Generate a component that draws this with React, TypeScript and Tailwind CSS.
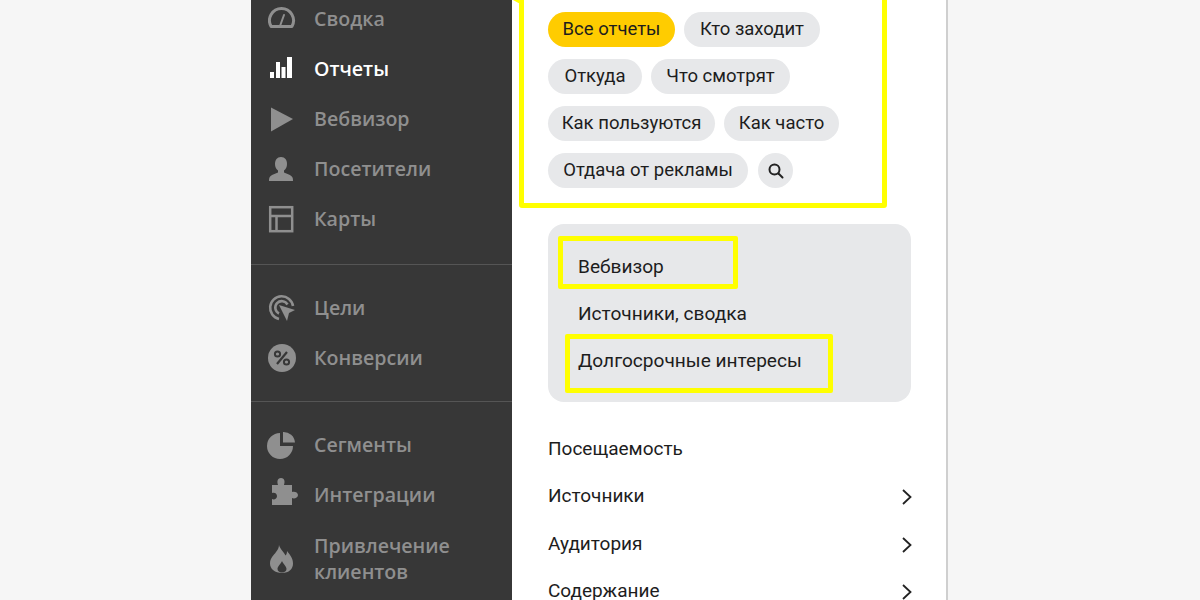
import { ReactNode } from "react";

const IconGauge = () => (
  <svg width="28" height="28" viewBox="0 0 28 28" fill="none" stroke="currentColor">
    <path d="M3.100 21.500 A12 12 0 1 1 23.900 21.500 Z" strokeWidth="3" strokeLinejoin="round" />
    <path d="M12 21 L16 10" strokeWidth="2" strokeLinecap="round" />
  </svg>
);

const IconBars = () => (
  <svg width="28" height="28" viewBox="0 0 28 28" fill="currentColor">
    <rect x="2" y="17" width="4" height="6" />
    <rect x="8" y="7" width="4" height="16" />
    <rect x="13.500" y="12" width="4" height="11" />
    <rect x="19" y="2" width="5" height="21" />
  </svg>
);

const IconPlay = () => (
  <svg width="28" height="28" viewBox="0 0 28 28" fill="currentColor">
    <path d="M3 2.500 L25 14 L3 26.500 Z" />
  </svg>
);

const IconUser = () => (
  <svg width="28" height="28" viewBox="0 0 28 28" fill="currentColor">
    <path d="M13 2c-4 0-6 3-6 7 0 3 1 5 3 6.500v2c-3 1.500-7 2-8.500 5-.4 1-.5 2-.5 3.500h24c0-1.500-.1-2.500-.5-3.500-1.500-3-5.500-3.500-8.500-5v-2c2-1.500 3-3.500 3-6.500 0-4-2-7-6-7z" />
  </svg>
);

const IconLayout = () => (
  <svg width="28" height="28" viewBox="0 0 28 28" fill="none" stroke="currentColor" strokeWidth="2.500">
    <rect x="2.200" y="2.200" width="22" height="24" />
    <path d="M2 11 H25 M8.500 11 V26" />
  </svg>
);

const IconTarget = () => (
  <svg width="28" height="28" viewBox="0 0 28 28" fill="none" stroke="currentColor" strokeWidth="2.600">
    <path d="M11 25 A11.500 11.500 0 1 1 25 12" />
    <path d="M11 19.500 A6.500 6.500 0 1 1 19.500 10.500" />
    <path d="M11 11 L27 16 L21 19 L19 27 Z" fill="currentColor" stroke="none" />
  </svg>
);

const IconPercent = () => (
  <svg width="28" height="28" viewBox="0 0 28 28">
    <circle cx="14" cy="14" r="14" fill="currentColor" />
    <circle cx="9.500" cy="10" r="2.600" fill="none" stroke="#373737" strokeWidth="2" />
    <circle cx="18.500" cy="18" r="2.600" fill="none" stroke="#373737" strokeWidth="2" />
    <path d="M19 8 L9 20" stroke="#373737" strokeWidth="2.200" />
  </svg>
);

const IconPie = () => (
  <svg width="28" height="28" viewBox="0 0 28 28" fill="currentColor" className="overflow-visible">
    <path d="M12 2 V15 H25 A13 13 0 1 1 12 2 Z" />
    <path d="M15 1 A11.500 11.500 0 0 1 27 11.500 H15 Z" />
  </svg>
);

const IconPuzzle = () => (
  <svg width="28" height="28" viewBox="0 0 28 28" fill="currentColor" className="overflow-visible">
    <path d="M4 4 H10 C9 1 9 -3 13 -3 C17 -3 17 1 16 4 H24 V11 C26 10 30 11 30 14 C30 17 26 18 24 17 V24 H4 V18 C6 19 9 18 9 15 C9 12 6 11 4 12 Z" />
  </svg>
);

const IconFlame = () => (
  <svg width="28" height="28" viewBox="0 0 28 28" fill="currentColor" fillRule="evenodd">
    <path d="M11 0 C12 4 16 7 17.500 10.500 C18.500 9.500 19 8 19 6 C22 10 25 13 25 18.500 C25 24 21 28 14 28 C7 28 2 24 2 18.500 C2 13 6 10 8 7 C9.500 5 11 3 11 0 Z M14 16 C13 19 9.500 21 9.500 24 C9.500 26 11.500 27.500 14 27.500 C16.500 27.500 18.500 26 18.500 24 C18.500 21 15 19 14 16 Z" />
  </svg>
);

const Chevron = () => (
  <svg width="14" height="18" viewBox="0 0 14 18" fill="none" stroke="#222" strokeWidth="1.800" className="translate-y-[1px]">
    <path d="M3 2 L10.500 9 L3 16" />
  </svg>
);

const IconSearch = () => (
  <svg width="16" height="16" viewBox="0 0 16 16" fill="none" stroke="#222" strokeWidth="2">
    <circle cx="6.500" cy="6.500" r="5" />
    <path d="M10.500 10.500 L14.500 14.500" strokeLinecap="round" />
  </svg>
);

function SideItem({ icon, active, children }: { icon: ReactNode; active?: boolean; children: ReactNode }) {
  return (
    <div className={`flex h-[50px] items-center pl-[17px] ${active ? "text-white" : "text-[#8f8f8f]"}`}>
      <span className="flex w-[28px] shrink-0 items-center justify-center">{icon}</span>
      <span className="ml-[18px] font-['Open_Sans',sans-serif] text-[19.600px] leading-[26px] font-semibold">
        {children}
      </span>
    </div>
  );
}

function Chip({ active, className, children }: { active?: boolean; className?: string; children: ReactNode }) {
  return (
    <div
      className={`flex h-[35px] items-center justify-center rounded-full text-[18.500px] text-[#1d1d1d] ${
        active ? "bg-[#ffcc00]" : "bg-[#e7e8ea]"
      } ${className}`}
    >
      {children}
    </div>
  );
}

function ListRow({ label, arrow = true }: { label: string; arrow?: boolean }) {
  return (
    <div className="flex h-[47.500px] items-center justify-between pr-[2px] text-[19px] text-[#1d1d1d]">
      <span>{label}</span>
      {arrow && <Chevron />}
    </div>
  );
}

export default function App() {
  return (
    <div className="flex h-[600px] w-[1200px] justify-center overflow-hidden bg-[#f6f6f6] pr-[1px] font-['Roboto',sans-serif]">
      <div className="flex h-[600px] w-[697px] overflow-hidden border-r-2 border-[#cfcfcf] bg-white">
        <aside className="h-[600px] w-[261px] shrink-0 bg-[#373737]">
          <div className="-mt-[6px]">
            <SideItem icon={<IconGauge />}>Сводка</SideItem>
            <SideItem icon={<IconBars />} active>
              Отчеты
            </SideItem>
            <SideItem icon={<IconPlay />}>Вебвизор</SideItem>
            <SideItem icon={<IconUser />}>Посетители</SideItem>
            <SideItem icon={<IconLayout />}>Карты</SideItem>
          </div>
          <div className="mt-[20px] mb-[18px] h-px bg-[#555555]" />
          <SideItem icon={<IconTarget />}>Цели</SideItem>
          <SideItem icon={<IconPercent />}>Конверсии</SideItem>
          <div className="mt-[18px] mb-[18px] h-px bg-[#555555]" />
          <SideItem icon={<IconPie />}>Сегменты</SideItem>
          <SideItem icon={<IconPuzzle />}>Интеграции</SideItem>
          <div className="mt-[14px]">
            <SideItem icon={<IconFlame />}>
              Привлечение
              <br />
              клиентов
            </SideItem>
          </div>
        </aside>
        <main className="min-w-0 flex-1">
          <div className="relative z-10 -mt-[10px] ml-[7px] w-[368px] rounded-[3px] border-[5px] border-[#ffff00] pt-[17px] pr-[24px] pb-[15px] pl-[24px]">
            <svg width="11" height="6" viewBox="0 0 11 6" className="absolute top-[5px] -left-[11px]">
              <path d="M0 0 H11 V6 Z" fill="#ffff00" />
            </svg>
            <div className="flex flex-col gap-[12px]">
              <div className="flex gap-[9px]">
                <Chip active className="w-[127px]">
                  Все отчеты
                </Chip>
                <Chip className="w-[136px]">Кто заходит</Chip>
              </div>
              <div className="flex gap-[9px]">
                <Chip className="w-[94px]">Откуда</Chip>
                <Chip className="w-[139px]">Что смотрят</Chip>
              </div>
              <div className="flex gap-[9px]">
                <Chip className="w-[167px]">Как пользуются</Chip>
                <Chip className="w-[115px]">Как часто</Chip>
              </div>
              <div className="flex gap-[10px]">
                <Chip className="w-[200px]">Отдача от рекламы</Chip>
                <div className="flex h-[35px] w-[35px] items-center justify-center rounded-full bg-[#e7e8ea]">
                  <IconSearch />
                </div>
              </div>
            </div>
          </div>
          <div className="mt-[16px] ml-[36px] h-[178px] w-[363px] rounded-[16px] bg-[#e7e8ea] pt-[19.500px] pl-[30px] text-[19.100px] text-[#1d1d1d]">
            <div className="relative flex h-[47px] items-center">
              Вебвизор
              <div className="absolute top-[-8px] left-[-20px] h-[53px] w-[180px] rounded-[2px] border-[5px] border-[#ffff00]" />
            </div>
            <div className="flex h-[47px] items-center">Источники, сводка</div>
            <div className="relative flex h-[47px] items-center">
              Долгосрочные интересы
              <div className="absolute top-[-4px] left-[-13px] h-[59px] w-[268px] rounded-[2px] border-[5px] border-[#ffff00]" />
            </div>
          </div>
          <div className="mt-[23px] ml-[36px] w-[368px]">
            <ListRow label="Посещаемость" arrow={false} />
            <ListRow label="Источники" />
            <ListRow label="Аудитория" />
            <ListRow label="Содержание" />
          </div>
        </main>
      </div>
    </div>
  );
}
